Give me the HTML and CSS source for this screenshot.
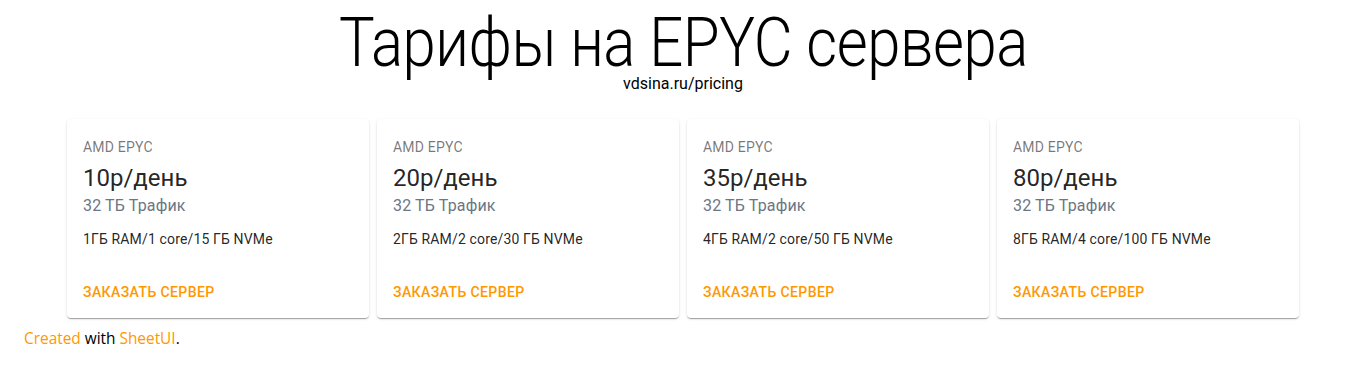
FILE: index.html
```html
<!DOCTYPE html>
<html lang="ru">
<head>
<meta charset="utf-8">
<title>Тарифы на EPYC сервера</title>
<link rel="stylesheet" href="styles.css">
</head>
<body>
<header class="hero">
  <h1 class="title"><span class="title-text">Тарифы на EPYC сервера</span></h1>
  <p class="subtitle">vdsina.ru/pricing</p>
</header>
<main class="container">
  <div class="grid">
    <div class="card">
      <div class="card-content">
        <div class="overline">AMD EPYC</div>
        <div class="price">10р/день</div>
        <div class="traffic">32 ТБ Трафик</div>
        <div class="specs">1ГБ RAM/1 core/15 ГБ NVMe</div>
      </div>
      <div class="card-actions"><a class="btn" href="#">Заказать сервер</a></div>
    </div>
    <div class="card">
      <div class="card-content">
        <div class="overline">AMD EPYC</div>
        <div class="price">20р/день</div>
        <div class="traffic">32 ТБ Трафик</div>
        <div class="specs">2ГБ RAM/2 core/30 ГБ NVMe</div>
      </div>
      <div class="card-actions"><a class="btn" href="#">Заказать сервер</a></div>
    </div>
    <div class="card">
      <div class="card-content">
        <div class="overline">AMD EPYC</div>
        <div class="price">35р/день</div>
        <div class="traffic">32 ТБ Трафик</div>
        <div class="specs">4ГБ RAM/2 core/50 ГБ NVMe</div>
      </div>
      <div class="card-actions"><a class="btn" href="#">Заказать сервер</a></div>
    </div>
    <div class="card">
      <div class="card-content">
        <div class="overline">AMD EPYC</div>
        <div class="price">80р/день</div>
        <div class="traffic">32 ТБ Трафик</div>
        <div class="specs">8ГБ RAM/4 core/100 ГБ NVMe</div>
      </div>
      <div class="card-actions"><a class="btn" href="#">Заказать сервер</a></div>
    </div>
  </div>
</main>
<footer class="footer"><a href="#">Created</a> with <a href="#">SheetUI</a>.</footer>
</body>
</html>
```
FILE: styles.css
```css
* { box-sizing: border-box; }
body {
  margin: 0;
  background: #fff;
  font-family: Roboto, "Noto Sans", sans-serif;
  color: rgba(0,0,0,0.87);
}
.hero { text-align: center; }
.title {
  margin: 0;
  padding-top: 11px;
  font-weight: 300;
  font-size: 68px;
  line-height: 64px;
  color: #000;
  letter-spacing: -0.5px;
}
.title-text {
  display: inline-block;
  transform: scaleX(0.88);
}
.subtitle {
  margin: 0;
  font-size: 16px;
  line-height: 18px;
  color: #000;
}
.container {
  max-width: 1280px;
  margin: 26px auto 0;
  padding: 0 24px;
}
.grid {
  display: grid;
  grid-template-columns: repeat(4, 1fr);
  gap: 8px;
}
.card {
  background: #fff;
  border-radius: 4px;
  box-shadow: 0 2px 1px -1px rgba(0,0,0,0.2), 0 1px 1px 0 rgba(0,0,0,0.14), 0 1px 3px 0 rgba(0,0,0,0.12);
  display: flex;
  flex-direction: column;
}
.card-content { padding: 18px 16px 17px; }
.overline {
  font-size: 14px;
  line-height: 20px;
  letter-spacing: 0.2px;
  color: rgba(0,0,0,0.54);
  margin-bottom: 5px;
}
.price {
  font-size: 24px;
  line-height: 32px;
  color: rgba(0,0,0,0.87);
}
.traffic {
  font-size: 16px;
  line-height: 24px;
  letter-spacing: 0.15px;
  color: #6b7686;
  margin-bottom: 11px;
}
.specs {
  font-size: 14px;
  line-height: 20px;
  letter-spacing: 0.15px;
  color: rgba(0,0,0,0.87);
}
.card-actions { padding: 8px; display: flex; }
.btn {
  display: inline-block;
  padding: 6px 8px;
  font-size: 14px;
  font-weight: 500;
  line-height: 24px;
  letter-spacing: 0.4px;
  text-transform: uppercase;
  text-decoration: none;
  color: #ff9800;
  border-radius: 4px;
}
.footer {
  padding: 11px 24px;
  font-family: "Open Sans", "Liberation Sans", sans-serif;
  font-size: 15.4px;
  line-height: 20px;
  color: #000;
}
.footer a { color: #ff9800; text-decoration: none; }
```
